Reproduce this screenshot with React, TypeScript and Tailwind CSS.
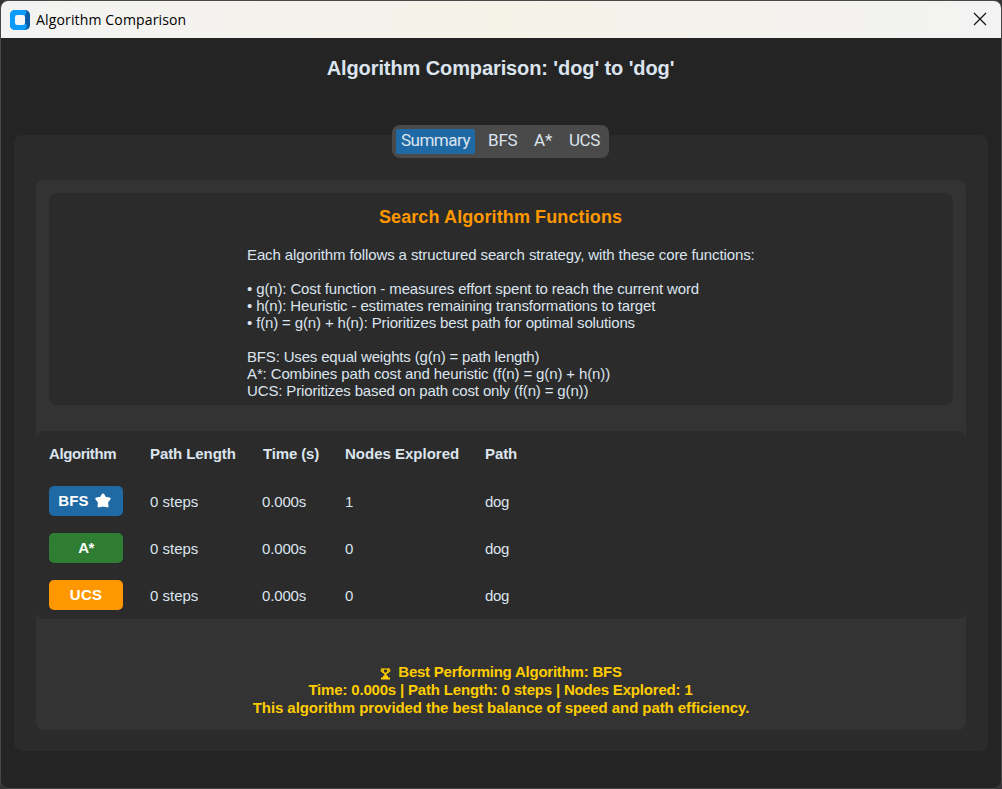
import React from "react";

type Row = { name: string; color: string; spacing: string; star?: boolean; nodes: string };

const rows: Row[] = [
  { name: "BFS", color: "bg-[#1f6aa5]", spacing: "tracking-[0.1px]", star: true, nodes: "1" },
  { name: "A*", color: "bg-[#2e7d32]", spacing: "tracking-[-0.6px]", nodes: "0" },
  { name: "UCS", color: "bg-[#ff9800]", spacing: "tracking-[0.2px]", nodes: "0" },
];

const lines: { text: string; spacing: string }[] = [
  { text: "Each algorithm follows a structured search strategy, with these core functions:", spacing: "tracking-[-0.114px]" },
  { text: "", spacing: "" },
  { text: "• g(n): Cost function - measures effort spent to reach the current word", spacing: "tracking-[-0.127px]" },
  { text: "• h(n): Heuristic - estimates remaining transformations to target", spacing: "tracking-[-0.135px]" },
  { text: "• f(n) = g(n) + h(n): Prioritizes best path for optimal solutions", spacing: "tracking-[-0.14px]" },
  { text: "", spacing: "" },
  { text: "BFS: Uses equal weights (g(n) = path length)", spacing: "tracking-[-0.17px]" },
  { text: "A*: Combines path cost and heuristic (f(n) = g(n) + h(n))", spacing: "tracking-[-0.125px]" },
  { text: "UCS: Prioritizes based on path cost only (f(n) = g(n))", spacing: "tracking-[-0.14px]" },
];

function AppIcon() {
  return (
    <svg width="20" height="20" viewBox="0 0 20 20" className="block">
      <rect width="20" height="20" rx="5" fill="#0b5ba6" />
      <path d="M5 0h10q1.500.500 1.500 2L15 6v7.500q2.500.5 1.500 4-.5 2.500-2.500 2.500H5a5 5 0 0 1-5-5V5a5 5 0 0 1 5-5Z" fill="#0a9bfb" />
      <rect x="5" y="5" width="10" height="10" rx="2.2" fill="#f5f5f5" />
    </svg>
  );
}

function Star() {
  return (
    <svg width="16" height="15" viewBox="0 0 16 15" className="block">
      <path
        d="M8 1.800 9.900 4.900l4.500.9-2.700 3.300.5 4L8 12.200l-4.200.9.5-4-2.700-3.300 4.500-.9Z"
        fill="#fff"
        stroke="#fff"
        strokeWidth="2.600"
        strokeLinejoin="round"
      />
    </svg>
  );
}

function Trophy() {
  return (
    <svg width="11" height="12" viewBox="0 0 11 12" className="block" fill="none" stroke="#ffcc00">
      <path d="M1 1h9" strokeWidth="1.200" />
      <path d="M3 1v2.200q.2 2 2.500 2.600Q7.800 5.200 8 3.200V1" strokeWidth="1.600" />
      <path d="M2.800 2H1v1.200l2.200 1.600M8.200 2H10v1.200L7.800 4.800" strokeWidth="1" />
      <path d="M5.500 5v3.500" strokeWidth="2.200" />
      <path d="M3 7.800h5v1.700h2v2H1v-2h2Z" fill="#ffcc00" stroke="none" />
    </svg>
  );
}

export default function App() {
  return (
    <div className="h-[789px] w-[1002px] overflow-hidden bg-[#353335] font-['Liberation_Sans',sans-serif] text-[#dce4ee]">
      <div className="flex h-[789px] w-[1002px] flex-col overflow-hidden rounded-lg border border-[#474747] bg-[#242424]">
        <header className="flex h-[37px] shrink-0 items-center bg-linear-to-r from-[#f3f3f3] via-[#f5f2e8] to-[#f3f3f3] pr-[14px] pl-[9px] text-black">
          <AppIcon />
          <span className="ml-[6px] grow font-['Open_Sans',sans-serif] text-[14px] leading-5 tracking-[0.15px]">Algorithm Comparison</span>
          <svg width="14" height="14" viewBox="0 0 14 14" fill="none" stroke="#111" strokeWidth="1.2" className="-mt-[2px]">
            <path d="m1 1 12 12M13 1 1 13" />
          </svg>
        </header>

        <h1 className="mt-[18px] h-6 shrink-0 pr-px text-center text-[20px] leading-6 font-bold tracking-[-0.1px]">Algorithm Comparison: 'dog' to 'dog'</h1>

        <main className="mx-[13px] mt-[55px] flex h-[616px] shrink-0 flex-col items-center rounded-lg bg-[#2b2b2b]">
          <nav className="-mt-[10px] mr-px flex h-[33px] w-[217px] shrink-0 rounded-lg bg-[#4a4a4a] p-1 font-['Roboto',sans-serif] text-[17px] leading-[23px]">
            <span className="h-[25px] w-[79px] rounded-xs bg-[#1f6aa5] text-center tracking-[-0.5px]">Summary</span>
            <span className="ml-[13px] w-[30px] tracking-[-0.2px]">BFS</span>
            <span className="ml-[16px] w-[18px] tracking-[-0.2px]">A*</span>
            <span className="ml-[17px] tracking-[-0.4px]">UCS</span>
          </nav>

          <div className="mt-[22px] flex h-[550px] w-[930px] flex-col rounded-lg bg-[#333333]">
            <section className="mx-[13px] mt-[13px] flex h-[212px] shrink-0 flex-col items-center rounded-lg bg-[#2b2b2b]">
              <h2 className="mt-[13px] pr-px text-[18px] leading-[22px] font-bold tracking-[0.11px] text-[#ff9800]">Search Algorithm Functions</h2>
              <div className="mt-[18px] w-[508px] text-[15px] leading-[17px] whitespace-nowrap">
                {lines.map((l, i) => (
                  <p key={i} className={`h-[17px] ${l.spacing}`}>{l.text}</p>
                ))}
              </div>
            </section>

            <section className="mt-[26px] h-[188px] shrink-0 rounded-lg bg-[#2b2b2b] pl-[13px] text-[15px]">
              <div className="grid h-[47px] grid-cols-[101px_113px_82px_140px_1fr] items-center font-bold">
                <span className="tracking-[-0.42px]">Algorithm</span>
                <span className="tracking-[-0.08px]">Path Length</span>
                <span className="tracking-[-0.15px]">Time (s)</span>
                <span>Nodes Explored</span>
                <span className="tracking-[-0.1px]">Path</span>
              </div>
              {rows.map((r) => (
                <div key={r.name} className="grid h-[47px] grid-cols-[101px_112px_83px_140px_1fr] items-center">
                  <span className={`mb-[2px] flex h-[30px] w-[74px] items-center justify-center gap-[6px] rounded-[5px] font-bold text-white ${r.color} ${r.spacing}`}>
                    <span className={r.star ? "-ml-[3px] pt-[2px]" : "pt-[2px]"}>{r.name}</span>
                    {r.star && <Star />}
                  </span>
                  <span className="pt-[2px]">0 steps</span>
                  <span className="pt-[2px] tracking-[-0.15px]">0.000s</span>
                  <span className="pt-[2px]">{r.nodes}</span>
                  <span className="pt-[2px] tracking-[-0.3px]">dog</span>
                </div>
              ))}
            </section>

            <section className="mt-[44px] text-center text-[15px] leading-[18px] font-bold text-[#ffcc00]">
              <div className="flex items-center justify-center gap-[7px]">
                <span className="pt-[3px]"><Trophy /></span>
                <span className="tracking-[-0.23px]">Best Performing Algorithm: BFS</span>
              </div>
              <div className="pr-px tracking-[-0.18px]">Time: 0.000s | Path Length: 0 steps | Nodes Explored: 1</div>
              <div className="tracking-[-0.07px]">This algorithm provided the best balance of speed and path efficiency.</div>
            </section>
          </div>
        </main>
      </div>
    </div>
  );
}
